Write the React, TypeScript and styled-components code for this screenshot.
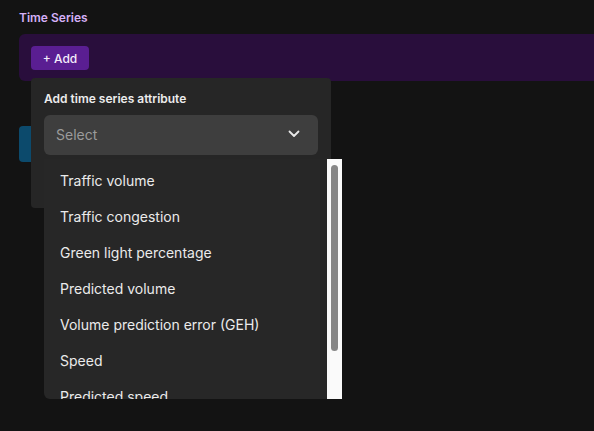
import React from 'react'
import styled, { createGlobalStyle } from 'styled-components'

const GlobalStyle = createGlobalStyle`
	html, body {
		margin: 0;
		padding: 0;
		background: #131313;
		font-family: Inter, 'Noto Sans', sans-serif;
		overflow: hidden;
	}
`

const options = [
	'Traffic volume',
	'Traffic congestion',
	'Green light percentage',
	'Predicted volume',
	'Volume prediction error (GEH)',
	'Speed',
	'Predicted speed'
]

export default function App() {
	return (
		<Page>
			<GlobalStyle />
			<Section>
				<SectionTitle>Time Series</SectionTitle>
				<SeriesBar>
					<AddButton>+ Add</AddButton>
				</SeriesBar>
				<ApplyButton />
				<Popover>
					<PopoverTitle>Add time series attribute</PopoverTitle>
					<SelectBox>
						<Placeholder>Select</Placeholder>
						<svg width="12" height="8" viewBox="0 0 12 8" fill="none">
							<path
								d="M1.5 1.5 L6 6 L10.5 1.5"
								stroke="#e8e8e8"
								strokeWidth="1.8"
								strokeLinecap="round"
								strokeLinejoin="round"
							/>
						</svg>
					</SelectBox>
				</Popover>
				<Menu>
					<MenuList>
						{options.map(opt => (
							<MenuItem key={opt}>{opt}</MenuItem>
						))}
					</MenuList>
					<ScrollTrack>
						<ScrollThumb />
					</ScrollTrack>
				</Menu>
			</Section>
		</Page>
	)
}

const Page = styled.div`
	width: 594px;
	height: 431px;
	position: relative;
	overflow: hidden;
`

const Section = styled.div`
	position: relative;
	padding: 10px 0 0 19px;
	display: flex;
	flex-direction: column;
	align-items: flex-start;
`

const SectionTitle = styled.div`
	font-size: 12px;
	font-weight: 600;
	color: #d5b0f7;
	line-height: 15px;
	height: 24px;
`

const SeriesBar = styled.div`
	box-sizing: border-box;
	width: 600px;
	height: 47px;
	padding: 12px;
	background: #290e3c;
	border-radius: 6px 0 0 6px;
	display: flex;
	align-items: flex-start;
`

const AddButton = styled.button`
	height: 24px;
	width: 58px;
	border: none;
	border-radius: 4px;
	background: #5a1e92;
	color: #f4ecfb;
	font-family: Inter, sans-serif;
	font-size: 12px;
	font-weight: 500;
	padding: 0;
`

const ApplyButton = styled.div`
	margin-top: 45px;
	width: 160px;
	height: 36px;
	border-radius: 4px;
	background: #0c4a6c;
`

const Popover = styled.div`
	position: absolute;
	left: 31px;
	top: 78px;
	box-sizing: border-box;
	width: 300px;
	height: 130px;
	padding: 14px 13px;
	background: #262626;
	border-radius: 4px;
	display: flex;
	flex-direction: column;
	gap: 9px;
`

const PopoverTitle = styled.div`
	font-size: 12px;
	font-weight: 600;
	color: #ececec;
	line-height: 14px;
`

const SelectBox = styled.div`
	box-sizing: border-box;
	height: 40px;
	width: 274px;
	padding: 0 18px 2px 12px;
	border-radius: 6px;
	background: #3e3e3e;
	display: flex;
	align-items: center;
	justify-content: space-between;
`

const Placeholder = styled.span`
	font-size: 14px;
	color: #9b9b9b;
`

const Menu = styled.div`
	position: absolute;
	left: 44px;
	top: 159px;
	width: 298px;
	height: 240px;
	display: flex;
	overflow: hidden;
`

const MenuList = styled.div`
	flex: 1;
	background: #272727;
	border-radius: 0 0 0 6px;
	padding-top: 3px;
	overflow: hidden;
`

const MenuItem = styled.div`
	height: 36px;
	padding-left: 16px;
	display: flex;
	align-items: center;
	font-size: 14px;
	color: #ebebeb;
`

const ScrollTrack = styled.div`
	width: 15px;
	background: #fafafa;
	padding: 6px 4px 0 4px;
	box-sizing: border-box;
`

const ScrollThumb = styled.div`
	height: 186px;
	border-radius: 4px;
	background: #868686;
`
